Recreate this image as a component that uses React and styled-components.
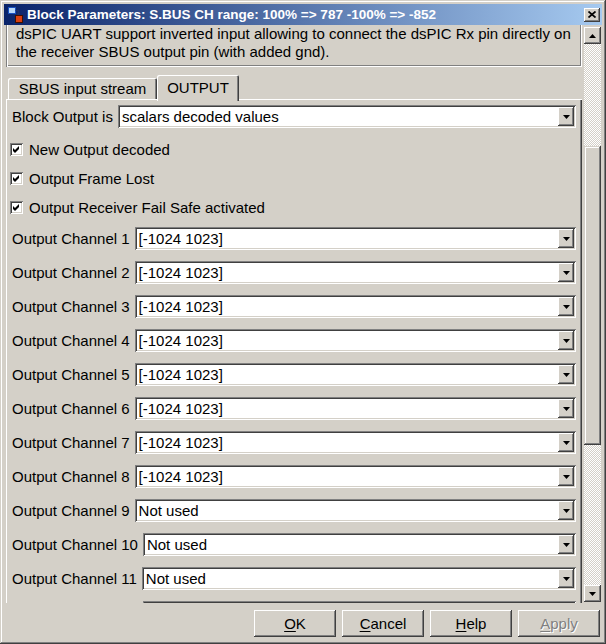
import React from 'react';
import styled, { createGlobalStyle, css } from 'styled-components';

const face = '#d4d0c8';
const shadow = '#808080';
const dark = '#404040';

const GlobalStyle = createGlobalStyle`
  html, body {
    margin: 0;
    padding: 0;
    background: ${face};
  }
  * {
    box-sizing: border-box;
  }
`;

// classic 3d edges
const raised = css`
  box-shadow: inset -1px -1px ${dark}, inset 1px 1px #fff, inset -2px -2px ${shadow}, inset 2px 2px ${face};
`;

const sunken = css`
  box-shadow: inset 1px 1px ${shadow}, inset -1px -1px #fff, inset 2px 2px ${dark}, inset -2px -2px ${face};
`;

const Window = styled.div`
  width: 606px;
  height: 644px;
  padding: 4px;
  display: flex;
  flex-direction: column;
  background: ${face};
  font-family: 'Liberation Sans', Arial, sans-serif;
  font-size: 15px;
  color: #000;
  box-shadow: inset -1px -1px ${dark}, inset 1px 1px ${face}, inset -2px -2px ${shadow}, inset 2px 2px #fff;
  overflow: hidden;
`;

const TitleBar = styled.div`
  height: 21px;
  flex: none;
  display: flex;
  align-items: center;
  padding: 0 2px 0 4px;
  background: linear-gradient(to right, #0a246a, #a6caf0);
`;

const TitleText = styled.div`
  flex: 1;
  margin-left: 3px;
  color: #fff;
  font-weight: bold;
  font-size: 13.5px;
  white-space: nowrap;
`;

const CloseButton = styled.div`
  width: 16px;
  height: 14px;
  display: flex;
  align-items: center;
  justify-content: center;
  background: ${face};
  ${raised};
`;

const Body = styled.div`
  flex: 1;
  display: flex;
  min-height: 0;
`;

const Viewport = styled.div`
  flex: 1;
  padding-left: 2px;
  margin-right: 2px;
  overflow: hidden;
  display: flex;
  flex-direction: column;
`;

const DescBox = styled.div`
  flex: none;
  padding: 0 8px 6px 10px;
  line-height: 18px;
  white-space: nowrap;
  box-shadow: inset 1px 0 ${shadow}, inset 2px 0 #fff, inset -1px -1px #fff, inset -2px -2px ${shadow};
`;

const TabStrip = styled.div`
  flex: none;
  display: flex;
  align-items: flex-end;
  height: 24px;
  margin-top: 8px;
  padding-left: 2px;
`;

const Tab = styled.div`
  width: ${(p) => p.$width}px;
  height: ${(p) => (p.$active ? 26 : 21)}px;
  margin-bottom: ${(p) => (p.$active ? -2 : 0)}px;
  padding-bottom: ${(p) => (p.$active ? 2 : 0)}px;
  position: relative;
  z-index: ${(p) => (p.$active ? 1 : 0)};
  display: flex;
  align-items: center;
  justify-content: center;
  background: ${face};
  border-radius: 2px 2px 0 0;
  box-shadow: inset 1px 1px #fff, inset -1px 0 ${dark}, inset -2px 0 ${shadow};
`;

const TabPane = styled.div`
  flex: 1;
  padding: 6px 6px 0 6px;
  box-shadow: inset 1px 1px #fff, inset -1px 0 ${dark}, inset -2px 0 ${shadow};
  display: flex;
  flex-direction: column;
`;

const FieldRow = styled.div`
  flex: none;
  height: 23px;
  display: flex;
  align-items: center;
  gap: 5px;
  padding-left: ${(p) => p.$indent || 0}px;
`;

const FieldLabel = styled.span`
  white-space: nowrap;
`;

const Combo = styled.div`
  flex: 1;
  height: 23px;
  display: flex;
  align-items: center;
  padding: 2px;
  background: #fff;
  ${sunken};
`;

const ComboText = styled.span`
  flex: 1;
  padding-left: 2px;
  white-space: nowrap;
`;

const DropButton = styled.div`
  width: 16px;
  height: 19px;
  display: flex;
  align-items: center;
  justify-content: center;
  background: ${face};
  ${raised};
`;

const CheckList = styled.div`
  margin-top: 7px;
  margin-left: -2px;
  display: flex;
  flex-direction: column;
`;

const CheckRow = styled.label`
  height: 29px;
  display: flex;
  align-items: center;
  gap: 6px;
`;

const CheckBox = styled.span`
  width: 13px;
  height: 13px;
  flex: none;
  background: #fff;
  ${sunken};
  display: flex;
`;

const ChannelList = styled.div`
  margin-top: 5px;
  display: flex;
  flex-direction: column;
  gap: 11px;
`;

const ScrollBar = styled.div`
  width: 17px;
  flex: none;
  margin: 2px 1px 1px 0;
  display: flex;
  flex-direction: column;
  background-color: ${face};
  background-image: repeating-conic-gradient(#fff 0% 25%, ${face} 0% 50%);
  background-size: 2px 2px;
`;

const ScrollButton = styled.div`
  width: 17px;
  height: 17px;
  flex: none;
  display: flex;
  align-items: center;
  justify-content: center;
  background: ${face};
  ${raised};
`;

const Track = styled.div`
  flex: ${(p) => (p.$h ? 'none' : 1)};
  height: ${(p) => (p.$h ? `${p.$h}px` : 'auto')};
`;

const Thumb = styled.div`
  height: 299px;
  flex: none;
  background: ${face};
  box-shadow: inset -1px -1px ${dark}, inset 1px 1px ${face}, inset -2px -2px ${shadow}, inset 2px 2px #fff;
`;

const ButtonRow = styled.div`
  height: 37px;
  flex: none;
  display: flex;
  justify-content: flex-end;
  gap: 6px;
  padding: 7px 2px 3px 0;
`;

const DialogButton = styled.div`
  width: 82px;
  height: 27px;
  display: flex;
  align-items: center;
  justify-content: center;
  background: ${face};
  color: ${(p) => (p.$disabled ? shadow : '#000')};
  text-shadow: ${(p) => (p.$disabled ? '1px 1px #fff' : 'none')};
  box-shadow: inset -1px -1px ${dark}, inset 1px 1px #fff, inset -2px -2px ${shadow}, inset 2px 2px ${face};

  u {
    text-decoration-thickness: 1px;
    text-underline-offset: 2px;
  }
`;

const BlockIcon = () => (
  <svg width="16" height="16" viewBox="0 0 16 16">
    <rect x="0.5" y="0.5" width="7" height="6" fill="#b8d8f8" stroke="#1850c0" />
    <path d="M7.5 3.5 H10.5 V8" fill="none" stroke="#203060" />
    <path d="M8.5 6.5 L10.5 9 L12.5 6.5" fill="#203060" />
    <rect x="7.5" y="8.5" width="7" height="7" fill="#d84010" stroke="#401000" />
  </svg>
);

const Arrow = ({ up }) => (
  <svg width="7" height="4" viewBox="0 0 7 4">
    <polygon points={up ? '3.5,0 7,4 0,4' : '0,0 7,0 3.5,4'} fill="#000" />
  </svg>
);

const CheckMark = () => (
  <svg width="13" height="13" viewBox="0 0 13 13">
    <polygon points="3,5 5,7 9,3 9,6 5,10 3,8" fill="#000" />
  </svg>
);

const ComboBox = ({ value }) => (
  <Combo>
    <ComboText>{value}</ComboText>
    <DropButton>
      <Arrow />
    </DropButton>
  </Combo>
);

const channels = [
  '[-1024 1023]', '[-1024 1023]', '[-1024 1023]', '[-1024 1023]',
  '[-1024 1023]', '[-1024 1023]', '[-1024 1023]', '[-1024 1023]',
  'Not used', 'Not used', 'Not used',
];

const checks = ['New Output decoded', 'Output Frame Lost', 'Output Receiver Fail Safe activated'];

export default function App() {
  return (
    <>
      <GlobalStyle />
      <Window>
        <TitleBar>
          <BlockIcon />
          <TitleText>Block Parameters: S.BUS CH range: 100% =&gt; 787 -100% =&gt; -852</TitleText>
          <CloseButton>
            <svg width="8" height="7" viewBox="0 0 8 7">
              <path d="M0.5 0.5 L7.5 6.5 M7.5 0.5 L0.5 6.5" stroke="#000" strokeWidth="1.7" />
            </svg>
          </CloseButton>
        </TitleBar>

        <Body>
          <Viewport>
            <DescBox>
              dsPIC UART support inverted input allowing to connect the dsPIC Rx pin directly on
              <br />
              the receiver SBUS output pin (with added gnd).
            </DescBox>

            <TabStrip>
              <Tab $width={149}>SBUS input stream</Tab>
              <Tab $width={82} $active>OUTPUT</Tab>
            </TabStrip>

            <TabPane>
              <FieldRow>
                <FieldLabel>Block Output is</FieldLabel>
                <ComboBox value="scalars decoded values" />
              </FieldRow>

              <CheckList>
                {checks.map((c) => (
                  <CheckRow key={c}>
                    <CheckBox>
                      <CheckMark />
                    </CheckBox>
                    {c}
                  </CheckRow>
                ))}
              </CheckList>

              <ChannelList>
                {channels.map((v, i) => (
                  <FieldRow key={i}>
                    <FieldLabel>Output Channel {i + 1}</FieldLabel>
                    <ComboBox value={v} />
                  </FieldRow>
                ))}
                {/* next row, scrolled below the fold: only its top edge shows */}
                <FieldRow $indent={131}>
                  <Combo />
                </FieldRow>
              </ChannelList>
            </TabPane>
          </Viewport>

          <ScrollBar>
            <ScrollButton>
              <Arrow up />
            </ScrollButton>
            <Track $h={102} />
            <Thumb />
            <Track />
            <ScrollButton>
              <Arrow />
            </ScrollButton>
          </ScrollBar>
        </Body>

        <ButtonRow>
          <DialogButton><span><u>O</u>K</span></DialogButton>
          <DialogButton><span><u>C</u>ancel</span></DialogButton>
          <DialogButton><span><u>H</u>elp</span></DialogButton>
          <DialogButton $disabled><span><u>A</u>pply</span></DialogButton>
        </ButtonRow>
      </Window>
    </>
  );
}
